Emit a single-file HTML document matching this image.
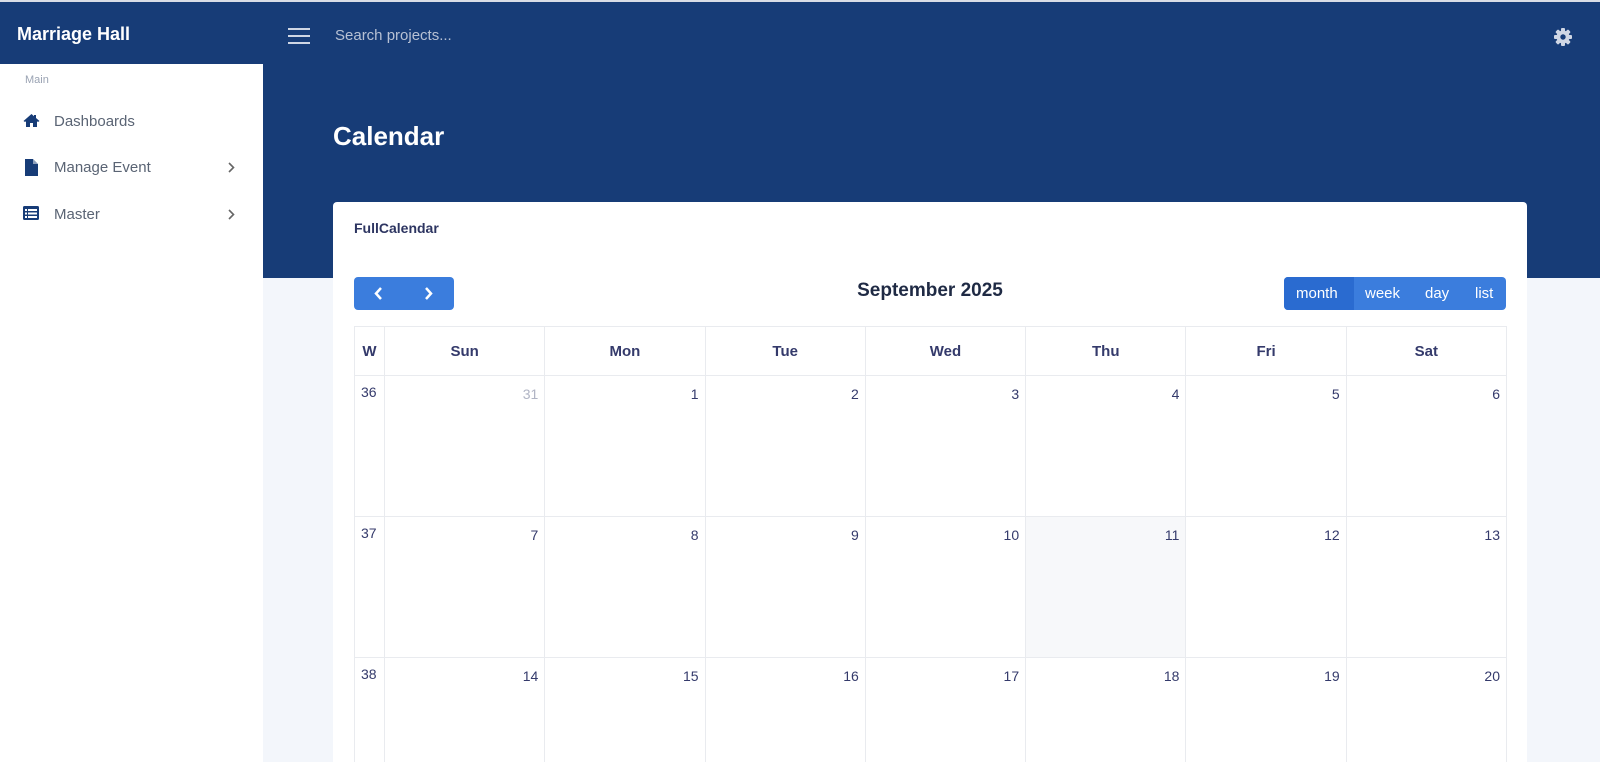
<!DOCTYPE html>
<html><head><meta charset="utf-8"><style>
*{margin:0;padding:0;box-sizing:border-box}
html,body{width:1600px;height:762px;overflow:hidden}
body{background:#f3f6fb;font-family:"Liberation Sans",sans-serif;position:relative}
.topline{position:absolute;left:0;top:0;width:1600px;height:2px;background:#d9dde6}
.hero{position:absolute;left:263px;top:2px;width:1337px;height:276px;background:#173c77}
.brand{position:absolute;left:0;top:2px;width:263px;height:62px;background:#173c77;color:#fff;font-weight:bold;font-size:18px;padding:22px 0 0 17px}
.side{position:absolute;left:0;top:64px;width:263px;height:698px;background:#fff}
.side .lbl{position:absolute;left:25px;top:10px;font-size:11px;color:#9aa3b3}
.item{position:absolute;left:0;width:263px;height:20px;font-size:15px;color:#5a6474}
.item span{position:absolute;left:54px;top:2px}
.item svg{position:absolute;left:23px;top:2px}
.item svg.chev{left:228px;top:5px}
.burger{position:absolute;left:288px;top:28px;width:22px}
.burger i{display:block;height:2px;background:#cfd6e4;margin-bottom:5px}
.search{position:absolute;left:335px;top:27px;color:#b7c1d4;font-size:15px}
.gear{position:absolute;left:1553px;top:27px}
h1{position:absolute;left:333px;top:121px;color:#fff;font-size:26px;font-weight:bold}
.card{position:absolute;left:333px;top:202px;width:1194px;height:560px;background:#fff;border-radius:4px 4px 0 0;overflow:hidden}
.ctitle{position:absolute;left:21px;top:18px;font-size:14px;color:#2d3561;font-weight:bold}
.nav{position:absolute;left:21px;top:75px;width:100px;height:33px;background:#3b7ddd;border-radius:4px}
.title{position:absolute;left:0;width:1194px;top:78px;text-align:center;font-size:19px;color:#1f2a44;font-weight:bold}
.views{position:absolute;left:951px;top:75px;height:33px;width:222px;background:#3b7ddd;border-radius:4px;overflow:hidden;color:#fff;font-size:15px}
.views div{position:absolute;top:8px}
table{position:absolute;left:21px;top:124px;border-collapse:collapse;table-layout:fixed;width:1153px}
td,th{border:1px solid #e9ebef;color:#343a6b}
th{height:49px;font-size:15px}
td{height:141px;vertical-align:top;text-align:right;font-size:14px;padding:10px 6px 0 0}
td.w{text-align:left;padding-left:6px;padding-top:8px}
.muted{color:#b0b4c4}
.today{background:#f7f8fa}
</style></head><body>
<div class="topline"></div>
<div class="hero"></div>
<div class="brand">Marriage Hall</div>
<div class="side">
 <div class="lbl">Main</div>
 <div class="item" style="top:47px"><svg width="17" height="15" viewBox="0 0 17 15"><path d="M8.5 1 L0.5 8 L2 9 L3 8.2 V14 H7 V10 H10 V14 H14 V8.2 L15 9 L16.5 8 L13 5 V2 H11 V3.3 Z" fill="#173c77"/></svg><span>Dashboards</span></div>
 <div class="item" style="top:93px"><svg width="14" height="17" viewBox="0 0 14 17" style="left:25px"><path d="M0 0 H8 L13 5 V17 H0 Z" fill="#173c77"/><path d="M8 0 V5 H13" fill="#fff" opacity=".5"/></svg><span>Manage Event</span><svg class="chev" width="7" height="11" viewBox="0 0 7 11"><path d="M1 1 L5.5 5.5 L1 10" stroke="#666" stroke-width="1.6" fill="none"/></svg></div>
 <div class="item" style="top:140px"><svg width="16" height="14" viewBox="0 0 16 14"><rect x="0" y="0" width="16" height="14" rx="1.5" fill="#173c77"/><rect x="2" y="3" width="2" height="2" fill="#fff"/><rect x="5" y="3" width="9" height="2" fill="#fff"/><rect x="2" y="6.5" width="2" height="2" fill="#fff"/><rect x="5" y="6.5" width="9" height="2" fill="#fff"/><rect x="2" y="10" width="2" height="2" fill="#fff"/><rect x="5" y="10" width="9" height="2" fill="#fff"/></svg><span>Master</span><svg class="chev" width="7" height="11" viewBox="0 0 7 11"><path d="M1 1 L5.5 5.5 L1 10" stroke="#666" stroke-width="1.6" fill="none"/></svg></div>
</div>
<div class="burger"><i></i><i></i><i></i></div>
<div class="search">Search projects...</div>
<svg class="gear" width="20" height="20" viewBox="0 0 20 20"><g fill="#cfd6e4"><circle cx="10" cy="10" r="6.5"/><g><rect x="8" y="1" width="4" height="18" rx="1"/><rect x="8" y="1" width="4" height="18" rx="1" transform="rotate(45 10 10)"/><rect x="8" y="1" width="4" height="18" rx="1" transform="rotate(90 10 10)"/><rect x="8" y="1" width="4" height="18" rx="1" transform="rotate(135 10 10)"/></g></g><circle cx="10" cy="10" r="2.7" fill="#173c77"/></svg>
<h1>Calendar</h1>
<div class="card">
 <div class="ctitle">FullCalendar</div>
 <div class="nav"><svg width="100" height="33"><path d="M27 11 L22 16.5 L27 22" stroke="#fff" stroke-width="2.5" fill="none"/><path d="M72 11 L77 16.5 L72 22" stroke="#fff" stroke-width="2.5" fill="none"/></svg></div>
 <div class="title">September 2025</div>
 <div class="views"><div style="left:0;top:0;width:70px;height:33px;background:#2a6bd0"></div><div style="left:12px">month</div><div style="left:81px">week</div><div style="left:141px">day</div><div style="left:191px">list</div></div>
 <table>
  <colgroup><col style="width:30px"><col span="7"></colgroup>
  <tr><th>W</th><th>Sun</th><th>Mon</th><th>Tue</th><th>Wed</th><th>Thu</th><th>Fri</th><th>Sat</th></tr>
  <tr><td class="w">36</td><td class="muted">31</td><td>1</td><td>2</td><td>3</td><td>4</td><td>5</td><td>6</td></tr>
  <tr><td class="w">37</td><td>7</td><td>8</td><td>9</td><td>10</td><td class="today">11</td><td>12</td><td>13</td></tr>
  <tr><td class="w">38</td><td>14</td><td>15</td><td>16</td><td>17</td><td>18</td><td>19</td><td>20</td></tr>
 </table>
</div>
</body></html>
